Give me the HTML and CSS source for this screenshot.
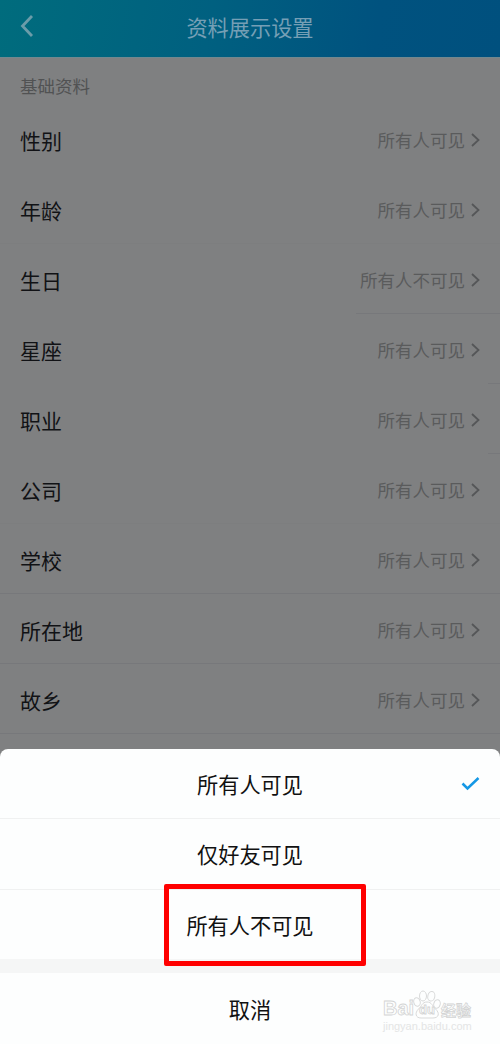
FILE: index.html
```html
<!DOCTYPE html>
<html lang="zh-CN">
<head>
<meta charset="utf-8">
<title>资料展示设置</title>
<link rel="stylesheet" href="styles.css">
</head>
<body>
<div class="screen">
  <header class="header">
    <svg class="back" width="14" height="24" viewBox="0 0 14 24"><path d="M12 2 2.5 12 12 22"/></svg>
    <h1 class="title">资料展示设置</h1>
  </header>
  <main class="content">
    <h2 class="section">基础资料</h2>
    <ul class="list">
      <li class="row plain"><span>性别</span><span class="value">所有人可见<svg class="arrow" viewBox="0 0 9 14"><path d="m1 1 6.5 6L1 13"/></svg></span></li>
      <li class="row faint"><span>年龄</span><span class="value">所有人可见<svg class="arrow" viewBox="0 0 9 14"><path d="m1 1 6.5 6L1 13"/></svg></span></li>
      <li class="row partial"><span>生日</span><span class="value">所有人不可见<svg class="arrow" viewBox="0 0 9 14"><path d="m1 1 6.5 6L1 13"/></svg></span></li>
      <li class="row edge"><span>星座</span><span class="value">所有人可见<svg class="arrow" viewBox="0 0 9 14"><path d="m1 1 6.5 6L1 13"/></svg></span></li>
      <li class="row edge"><span>职业</span><span class="value">所有人可见<svg class="arrow" viewBox="0 0 9 14"><path d="m1 1 6.5 6L1 13"/></svg></span></li>
      <li class="row faint"><span>公司</span><span class="value">所有人可见<svg class="arrow" viewBox="0 0 9 14"><path d="m1 1 6.5 6L1 13"/></svg></span></li>
      <li class="row"><span>学校</span><span class="value">所有人可见<svg class="arrow" viewBox="0 0 9 14"><path d="m1 1 6.5 6L1 13"/></svg></span></li>
      <li class="row"><span>所在地</span><span class="value">所有人可见<svg class="arrow" viewBox="0 0 9 14"><path d="m1 1 6.5 6L1 13"/></svg></span></li>
      <li class="row"><span>故乡</span><span class="value">所有人可见<svg class="arrow" viewBox="0 0 9 14"><path d="m1 1 6.5 6L1 13"/></svg></span></li>
    </ul>
  </main>
  <section class="sheet">
    <button class="option">所有人可见<svg class="check" width="19" height="15" viewBox="0 0 19 15"><path d="m1.5 7.5 5 5L17.5 2"/></svg></button>
    <button class="option">仅好友可见</button>
    <button class="option chosen">所有人不可见<span class="highlight"></span></button>
    <button class="cancel">取消</button>
  </section>
  <div class="watermark">
    <div class="brand">
      <span class="latin">Bai</span>
      <span class="paw">
        <svg width="28" height="29" viewBox="0 0 28 29">
          <ellipse cx="4" cy="12" rx="3.2" ry="4.3" transform="rotate(-15 4 12)"/>
          <ellipse cx="10" cy="6" rx="3.5" ry="5"/>
          <ellipse cx="18.3" cy="6.3" rx="3.5" ry="4.8" transform="rotate(12 18.3 6.3)"/>
          <ellipse cx="24" cy="14" rx="3.2" ry="4.3" transform="rotate(15 24 14)"/>
          <path d="M14 12c-5 0-5 4-8.5 7-4 4-3 9 2.500 9h12c6 0 7-5 2.500-9-3.500-3-3.500-7-8.500-7Z"/>
        </svg>
        <span class="du">du</span>
      </span>
      <span class="hanzi">经验</span>
    </div>
    <div class="site">jingyan.baidu.com</div>
  </div>
</div>
</body>
</html>
```
FILE: styles.css
```css
* { box-sizing: border-box; }

body {
  margin: 0;
  font-family: "Noto Sans CJK SC", sans-serif;
}

.screen {
  position: relative;
  display: flex;
  flex-direction: column;
  width: 500px;
  height: 1044px;
  overflow: hidden;
  background: #7f8081;
}

.header {
  position: relative;
  display: flex;
  align-items: center;
  justify-content: center;
  height: 57px;
  padding-bottom: 4px;
  background: linear-gradient(100deg, #006c7d 0%, #006080 42%, #00527f 75%, #00507e 100%);
}

.back {
  position: absolute;
  left: 20px;
  top: 14px;
  fill: none;
  stroke: #6b9ca9;
  stroke-width: 2.8;
}

.title {
  margin: 0;
  font-size: 21.2px;
  font-weight: 400;
  line-height: 52px;
  color: #759fb5;
}

.content {
  height: 692px;
  border-top: 1px solid #71888f;
}

.section {
  height: 48px;
  margin: 0;
  padding: 4px 20px 0;
  font-size: 17.5px;
  font-weight: 400;
  line-height: 48px;
  color: #515253;
}

.list {
  margin: 0;
  padding: 0;
  list-style: none;
}

.row {
  display: flex;
  justify-content: space-between;
  height: 70px;
  padding: 0 20px;
  font-size: 21px;
  line-height: 68px;
  color: #111215;
  background: linear-gradient(#77787b, #77787b) 100% 67px / 100% 1px no-repeat;
}

.plain { background: none; }

.faint { background-image: linear-gradient(#7d7e7f, #7d7e7f); }

.partial { background-size: 144px 1px; }

.edge { background-size: 12px 1px; }

.value {
  display: flex;
  align-items: center;
  gap: 6px;
  height: 68px;
  font-size: 17.5px;
  color: #5a5b5c;
}

.arrow {
  width: 9px;
  height: 14px;
  fill: none;
  stroke: #555658;
  stroke-width: 1.8;
}

.sheet {
  display: flex;
  flex-direction: column;
  height: 295px;
  border-radius: 8px 8px 0 0;
  background: #fdfefe;
}

.option,
.cancel {
  position: relative;
  width: 100%;
  margin: 0;
  padding: 0;
  border: 0;
  background: none;
  font: 21.2px/70px "Noto Sans CJK SC", sans-serif;
  text-align: center;
  color: #111;
}

.option {
  height: 70px;
  border-bottom: 1px solid #f0f1f1;
}

.option + .option { height: 71px; }

.option.chosen {
  height: 83px;
  border-bottom: 14px solid #f5f6f6;
}

.cancel { height: 71px; }

.check {
  position: absolute;
  right: 20px;
  top: 27px;
  fill: none;
  stroke: #1598e5;
  stroke-width: 2.5;
}

.highlight {
  position: absolute;
  left: 164px;
  top: -6px;
  width: 202px;
  height: 82px;
  border: 5px solid #f00;
  border-radius: 2px;
}

.watermark {
  position: absolute;
  left: 383px;
  top: 989px;
  width: 90px;
  color: #fdfefe;
}

.brand {
  display: flex;
  align-items: flex-end;
  height: 30px;
  -webkit-text-stroke: 0.8px #d3d4d4;
}

.latin {
  flex: none;
  width: 30px;
  font: bold 20px/22px "Liberation Sans", sans-serif;
}

.paw {
  position: relative;
  flex: none;
  width: 28px;
  height: 29px;
}

.paw svg {
  display: block;
  fill: #fdfefe;
  stroke: #d9dada;
  stroke-width: 1;
}

.du {
  position: absolute;
  left: 6px;
  bottom: 1px;
  font: bold 13px/16px "Liberation Sans", sans-serif;
}

.hanzi {
  flex: none;
  font-size: 15px;
  font-weight: 700;
  line-height: 19px;
}

.site {
  font: 11px/14px "Liberation Sans", sans-serif;
  color: #e4e5e5;
}
```
